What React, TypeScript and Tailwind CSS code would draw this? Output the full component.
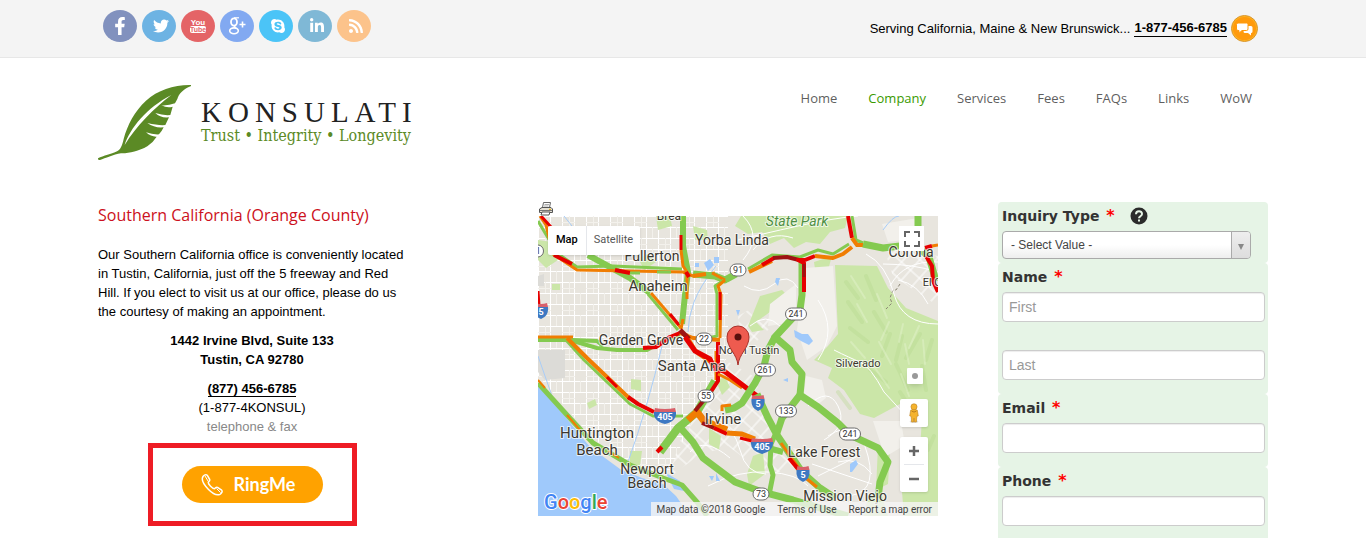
import type { ReactNode } from "react";
import { FaFacebookF, FaTwitter, FaSkype, FaLinkedinIn, FaRss } from "react-icons/fa";

const GREEN = "#84ca50";
const ORANGE = "#f07d02";
const RED = "#e60000";
const DARK = "#9e1313";

function YouTubeMark() {
  return (
    <svg viewBox="0 0 18 16" className="h-4 w-[18px]">
      <text x="9" y="7" textAnchor="middle" fontSize="8" fontWeight="bold" fill="#fff" fontFamily="Liberation Sans Narrow, Liberation Sans, sans-serif">You</text>
      <rect x="1" y="8" width="16" height="7" rx="2" fill="#fff" />
      <text x="9" y="14" textAnchor="middle" fontSize="7" fontWeight="bold" fill="#e46466" fontFamily="Liberation Sans Narrow, Liberation Sans, sans-serif">Tube</text>
    </svg>
  );
}

function GooglePlusMark() {
  return (
    <svg viewBox="0 0 20 20" className="size-5" fill="none" stroke="#fff">
      <ellipse cx="7" cy="6" rx="3" ry="3.7" strokeWidth="1.8" />
      <path d="M7 1.8h5" strokeWidth="1.2" />
      <path d="M8.500 9.600c-2 1 -1 1.800 .8 2.800" strokeWidth="1.600" />
      <ellipse cx="7" cy="14.800" rx="4.300" ry="2.900" strokeWidth="1.600" />
      <path d="M15.500 5.500v6M12.500 8.500h6" strokeWidth="1.600" />
    </svg>
  );
}

const socials: { label: string; bg: string; icon: ReactNode }[] = [
  { label: "Facebook", bg: "bg-[#8191be]", icon: <FaFacebookF className="size-[18px]" /> },
  { label: "Twitter", bg: "bg-[#6db3e3]", icon: <FaTwitter className="ml-1 size-4" /> },
  { label: "YouTube", bg: "bg-[#e46466]", icon: <YouTubeMark /> },
  { label: "Google Plus", bg: "bg-[#82a9f1]", icon: <GooglePlusMark /> },
  { label: "Skype", bg: "bg-[#4bc4f7]", icon: <FaSkype className="ml-1 size-4" /> },
  { label: "LinkedIn", bg: "bg-[#7fb8d6]", icon: <FaLinkedinIn className="ml-1 size-4" /> },
  { label: "RSS", bg: "bg-[#fcc38b]", icon: <FaRss className="ml-1 size-4" /> },
];

function TopBar() {
  return (
    <div className="border-b border-[#e7e7e7] bg-[#f4f4f4]">
      <div className="mx-auto flex h-[57px] max-w-[1170px] items-center justify-between pr-[10px] pl-[5px]">
        <div className="-mt-[5px] flex gap-[5px]">
          {socials.map((s) => (
            <a key={s.label} href="#" aria-label={s.label} className={`flex h-8 w-[34px] items-center justify-center rounded-[50%] text-white ${s.bg}`}>
              {s.icon}
            </a>
          ))}
        </div>
        <div className="flex items-center gap-1 text-[13px] text-black">
          <span>Serving California, Maine &amp; New Brunswick...</span>
          <a href="tel:18774566785" className="border-b border-black leading-4 font-bold">1-877-456-6785</a>
          <a href="#" aria-label="Chat">
            <svg viewBox="0 0 27 27" className="size-[27px]">
              <circle cx="13.5" cy="13.5" r="13" fill="#ffb21e" stroke="#d9962e" />
              <circle cx="13.5" cy="13.5" r="11.500" fill="#ff9a0c" />
              <path d="M16 11h4a1.500 1.500 0 0 1 1.500 1.500v4a1.500 1.500 0 0 1 -1.500 1.500v2.500l-3-2.500h-3a1.500 1.500 0 0 1 -1.500 -1.500z" fill="#fff" />
              <path d="M7 8h8.500a1.500 1.500 0 0 1 1.500 1.500v4.500a1.500 1.500 0 0 1 -1.500 1.500h-4.500l-3 2.700v-2.700h-1a1.500 1.500 0 0 1 -1.500 -1.500v-4.500a1.500 1.500 0 0 1 1.500 -1.500z" fill="#fff" stroke="#ff9a0c" strokeWidth="1" />
            </svg>
          </a>
        </div>
      </div>
    </div>
  );
}

function Leaf() {
  return (
    <svg viewBox="24 27 282 231" className="h-[77px] w-[94px]" aria-hidden="true">
      <path
        fill="#5b8a25"
        d="M24 250C40 241 66 236 78 230C92 226 97 210 101 192C112 150 134 108 168 77C204 45 252 29 303 30C304 33 302 35 298 35C280 43 266 56 262 72L255 85Q237 92 214 91Q232 100 248 95L241 120Q220 122 196 114Q212 130 237 127L226 150Q206 152 172 144Q194 160 221 157Q216 168 207 178Q188 179 168 172Q184 186 200 185Q188 204 172 214C146 229 114 236 93 235C70 239 46 250 30 255C26 256 23 252 24 250Z"
      />
      <path d="M104 210C120 160 170 98 244 60C190 102 140 152 104 210Z" fill="#fff" />
    </svg>
  );
}

const nav = ["Home", "Company", "Services", "Fees", "FAQs", "Links", "WoW"];

function Header() {
  return (
    <header className="mx-auto flex h-36 max-w-[1170px] items-start justify-between pt-[26px] pr-4">
      <a href="#" className="flex gap-[9px]">
        <Leaf />
        <span className="flex flex-col pt-[14px]">
          <span className="font-[Liberation_Serif,serif] text-[29px] leading-7 tracking-[6px] text-[#222]">KONSULATI</span>
          <span className="font-[DejaVu_Serif_Condensed,DejaVu_Serif,serif] text-[16px] leading-5 text-[#5b8a25]">Trust • Integrity • Longevity</span>
        </span>
      </a>
      <nav className="flex gap-[31px] pt-1 font-[Open_Sans,sans-serif] text-[13px] leading-5">
        {nav.map((n) => (
          <a key={n} href="#" className={n === "Company" ? "text-[#3a9a00]" : "text-[#5f5f5f]"}>{n}</a>
        ))}
      </nav>
    </header>
  );
}

function Office() {
  return (
    <section className="max-w-[308px] text-[13px] leading-[19px] text-black">
      <h1 className="font-[Open_Sans,sans-serif] text-[16px] leading-[26px] text-[#cc1020]">Southern California (Orange County)</h1>
      <p className="mt-[17px]">
        Our Southern California office is conveniently located in Tustin, California, just off the 5 freeway and Red Hill. If you elect to visit us at our office, please do us the courtesy of making an appointment.
      </p>
      <div className="text-center">
        <p className="mt-[10px] font-bold">1442 Irvine Blvd, Suite 133<br />Tustin, CA 92780</p>
        <p className="mt-[10px]"><a href="tel:8774566785" className="border-b border-black font-bold">(877) 456-6785</a></p>
        <p>(1-877-4KONSUL)</p>
        <p className="text-[#888]">telephone &amp; fax</p>
      </div>
      <div className="mx-auto mt-[7px] flex h-[83px] w-[209px] items-center justify-center border-[5px] border-[#ee1c25]">
        <button className="flex h-[37px] w-[141px] items-center gap-[10px] rounded-full bg-[#ffa200] pl-[18px] font-[Lato,sans-serif] text-[18px] font-bold text-white">
          <svg viewBox="0 0 24 24" className="size-6" fill="none" stroke="#fff" strokeWidth="1.500" strokeLinejoin="round">
            <path d="M3 3.500C4 2 6 1 7.200 2.200L9.700 6.500C10.200 7.500 9.500 8.300 8.300 9.200C8 11 12.500 15.800 14.700 15.700C15.600 14.300 16.500 13.800 17.500 14.400L21.700 17.200C22.800 18.200 21.500 20.500 20 21.300C17 22.800 12.500 20.500 8.500 16.500C4 12 1 6.800 3 3.500Z" />
            <path d="M5 3l3 5M16.500 15.500l4 4" strokeWidth="1" />
          </svg>
          RingMe
        </button>
      </div>
    </section>
  );
}

type Road = { c: string; w: number; p: string };

const roads: Road[] = [
  { c: GREEN, w: 5, p: "0,167 29,199 55,227 92,249 125,262 144,269 159,286 169,300" },
  { c: ORANGE, w: 2, p: "0,164 7,172" },
  { c: ORANGE, w: 2, p: "29,199 42,214" },
  { c: ORANGE, w: 2, p: "70,235 81,242" },
  { c: GREEN, w: 6, p: "50,39 92,62 112,77" },
  { c: GREEN, w: 3, p: "110,78 140,114" },
  { c: ORANGE, w: 3, p: "113,77 143,112" },
  { c: RED, w: 3, p: "132,98 141,109" },
  { c: GREEN, w: 6, p: "145,0 145,30 150,56 147,79 144,108" },
  { c: RED, w: 3, p: "143,19 143,34" },
  { c: ORANGE, w: 3, p: "143,34 145,50 149,56 149,83" },
  { c: ORANGE, w: 3, p: "145,103 143,113" },
  { c: GREEN, w: 3, p: "0,5 19,37 39,51 75,50 144,53" },
  { c: ORANGE, w: 3, p: "2,0 8,9 15,38 39,54 145,56 155,60 177,57" },
  { c: RED, w: 3, p: "3,0 13,11" },
  { c: RED, w: 4, p: "16,39 34,48" },
  { c: RED, w: 4, p: "77,54 92,57" },
  { c: GREEN, w: 3, p: "92,57 102,57" },
  { c: GREEN, w: 3, p: "119,56 133,56" },
  { c: GREEN, w: 7, p: "155,58 177,60 187,64 198,58" },
  { c: ORANGE, w: 4, p: "155,60 168,58" },
  { c: ORANGE, w: 3, p: "174,57 187,64" },
  { c: RED, w: 4, p: "148,56 151,61" },
  { c: GREEN, w: 3, p: "186,64 177,70 179,78 179,120 170,122" },
  { c: ORANGE, w: 3, p: "187,64 180,70 183,79 182,122" },
  { c: RED, w: 3, p: "182,76 182,104" },
  { c: GREEN, w: 4, p: "0,124 35,124 59,125 65,130" },
  { c: GREEN, w: 4, p: "35,125 59,132 79,134 109,134 125,125 142,119" },
  { c: ORANGE, w: 3, p: "0,121 35,121" },
  { c: RED, w: 4, p: "105,132 118,131 132,121 142,117" },
  { c: ORANGE, w: 4, p: "142,117 155,122 182,124" },
  { c: GREEN, w: 3, p: "27,123 46,144 69,166 92,188 115,200 145,200" },
  { c: ORANGE, w: 4, p: "29,122 49,142 69,161 92,183" },
  { c: RED, w: 3, p: "69,161 79,171" },
  { c: RED, w: 4, p: "90,181 100,188 116,196" },
  { c: GREEN, w: 8, p: "122,236 140,212 159,196 177,165" },
  { c: RED, w: 4, p: "119,236 124,231" },
  { c: ORANGE, w: 7, p: "150,204 159,196 166,205 189,214" },
  { c: ORANGE, w: 3, p: "148,118 160,138 176,149" },
  { c: DARK, w: 5, p: "142,114 151,123" },
  { c: RED, w: 5, p: "147,121 157,135 172,143 176,152" },
  { c: ORANGE, w: 3, p: "178,135 178,164" },
  { c: RED, w: 4, p: "180,126 180,153 180,165 172,177" },
  { c: DARK, w: 4, p: "166,184 157,195" },
  { c: ORANGE, w: 3, p: "180,158 192,164 204,172" },
  { c: RED, w: 5, p: "176,152 186,155 202,167 219,180" },
  { c: DARK, w: 4, p: "164,207 176,212" },
  { c: RED, w: 4, p: "176,212 189,218" },
  { c: ORANGE, w: 5, p: "189,217 204,218 217,223" },
  { c: RED, w: 3, p: "202,222 214,225" },
  { c: GREEN, w: 7, p: "139,208 155,226 165,242 189,260 197,266 224,276 255,284 310,300" },
  { c: GREEN, w: 7, p: "219,178 230,202 239,219 264,256 282,272 297,282" },
  { c: GREEN, w: 6, p: "230,232 245,236" },
  { c: ORANGE, w: 3, p: "243,227 255,244 269,263 279,271" },
  { c: RED, w: 4, p: "251,242 260,253" },
  { c: GREEN, w: 7, p: "237,121 230,134 226,150 217,167 204,187 196,192 187,194" },
  { c: ORANGE, w: 3, p: "184,195 184,190 193,189" },
  { c: GREEN, w: 7, p: "264,46 264,79 262,94 237,121 252,134 254,146 264,158 262,179 280,191 300,207 312,219 340,232 350,246 342,266 340,282" },
  { c: GREEN, w: 7, p: "262,179 244,202 239,217" },
  { c: GREEN, w: 5, p: "237,219 233,228 232,249 235,259 231,279" },
  { c: GREEN, w: 3, p: "210,53 234,39 262,41 280,34 295,38 311,28" },
  { c: ORANGE, w: 4, p: "211,56 234,45" },
  { c: RED, w: 4, p: "224,49 236,42" },
  { c: DARK, w: 4, p: "235,42 249,41 261,44" },
  { c: RED, w: 4, p: "266,76 266,47 260,44 267,44 277,40" },
  { c: DARK, w: 3, p: "266,48 266,61" },
  { c: ORANGE, w: 4, p: "277,40 295,42 305,38 314,31" },
  { c: GREEN, w: 3, p: "314,0 318,24 325,27" },
  { c: RED, w: 4, p: "310,0 314,22" },
  { c: ORANGE, w: 4, p: "314,22 319,29 325,29" },
  { c: GREEN, w: 7, p: "325,28 345,32 362,30 380,31" },
  { c: GREEN, w: 7, p: "380,0 380,31 391,41 398,65" },
  { c: RED, w: 4, p: "387,32 394,30" },
  { c: ORANGE, w: 3, p: "394,30 400,29" },
  { c: RED, w: 4, p: "388,40 394,50 395,65 400,76" },
  { c: RED, w: 3, p: "0,75 1,90" },
];

const places: { t: string; x: number; y: number; s: number }[] = [
  { t: "Brea", x: 131, y: 4, s: 12 },
  { t: "Yorba Linda", x: 194, y: 29, s: 14 },
  { t: "Fullerton", x: 114, y: 45, s: 14 },
  { t: "Anaheim", x: 120, y: 75, s: 15 },
  { t: "Garden Grove", x: 103, y: 129, s: 14 },
  { t: "Santa Ana", x: 154, y: 155, s: 15 },
  { t: "North Tustin", x: 211, y: 138, s: 11 },
  { t: "Silverado", x: 320, y: 151, s: 11 },
  { t: "Irvine", x: 185, y: 208, s: 15 },
  { t: "Huntington", x: 59, y: 222, s: 15 },
  { t: "Beach", x: 59, y: 239, s: 15 },
  { t: "Newport", x: 109, y: 258, s: 14 },
  { t: "Beach", x: 109, y: 272, s: 14 },
  { t: "Lake Forest", x: 286, y: 241, s: 14 },
  { t: "Mission Viejo", x: 307, y: 285, s: 14 },
  { t: "Corona", x: 373, y: 41, s: 14 },
  { t: "El Cerrito", x: 407, y: 70, s: 11 },
];

const routes: { t: string; x: number; y: number }[] = [
  { t: "1", x: 0, y: 35 },
  { t: "91", x: 200, y: 54 },
  { t: "22", x: 166, y: 123 },
  { t: "55", x: 168, y: 180 },
  { t: "241", x: 258, y: 98 },
  { t: "261", x: 227, y: 154 },
  { t: "133", x: 248, y: 195 },
  { t: "241", x: 312, y: 218 },
  { t: "73", x: 223, y: 278 },
];

const interstates: { t: string; x: number; y: number; w: number }[] = [
  { t: "405", x: 127, y: 200, w: 22 },
  { t: "5", x: 220, y: 187, w: 13 },
  { t: "405", x: 224, y: 230, w: 22 },
  { t: "5", x: 265, y: 258, w: 13 },
  { t: "5", x: 3, y: 95, w: 14 },
];

function Tracts() {
  return (
    <g fill="none">
      <g fill="#cbe6a8">
        <path d="M203 0h107l-3 12-15 4-10 12-14-2-12 6-10-10-14 6-8-12-14 2-13-8z" />
        <path d="M0 24l14 2 6 18-12 8-8-8z M14 68h8v6h-8z M118 0l14 0 2 10-14 4z M155 10l14 4 1 10-13 0z" />
        <path d="M297 49l42 1 11 22 18 20 32 13V202l-38 0 0-14-26 14-14-4-16-24-16-12 4-10-18-8 14-14 10-12z" />
        <path d="M222 80l22-6 8 8-20 14-14 10 8 8-12 2-4-6z M276 46l18-6-4 14-12 6z" />
        <path d="M93 163l10 1 0 11-10-2z M92 235l12 0-2 14-10 2z M49 187l8-4 2 6-8 4z M171 212l12 8-2 14-10-6z M178 165l9-4 5 10-8 8z M209 258l6-18 10-4 2 22-16 12z M256 284l12 2 8 14h-20z" />
        <path d="M340 230l12 4-2 34-12 6z M384 202l16 0v98h-34l-2-24 14-12 4-30z M100 42l10-4 8 8-12 8z M330 282l12-8 8 26h-24z" />
      </g>
      <path d="M0 134l27 0 0 28-20 2-7-8z M0 60l6-2v12H0z M90 36h12v8H90z" fill="#dcdbd7" />
      <g fill="#f2f0eb">
        <path d="M232 88l26-20v26l-14 14-14 2z M267 52l28-2 4 60-10 20-20 14-10-30z M344 8l36-6v20l-30 4z" />
        <path d="M268 160l16 4 4 18-10 8-12-12z M335 205l28 0 4 24-20 12z" />
      </g>
      <g stroke="#b4d78c" strokeWidth="4" strokeLinecap="round" opacity=".35">
        <path d="M308 66l12 16m-10 4l14 20m4-46l10 24m-26 28l18 14m6-30l12 20m4 2l-8 22m20-20l-6 24m24-26l-14 24m26-18l-6 20m-56 10l16 12m10-18l12 26m14-24l4 24m16-32l2 30m-44 4l14 22m-76-22l12 16m84 28l-6 14" />
      </g>
      <g stroke="#e2f1ca" strokeWidth="2" strokeLinecap="round" opacity=".5">
        <path d="M313 60l14 22m-8 6l10 18m10-28l10 24m2 4l-8 18m22-16l-4 18m20-16l-10 22m-58-6l14 16m14-16l12 22m14-20l4 20m14-24l2 24m-50 4l14 20m12-14l8 22" />
      </g>
      <path d="M362 68l-4 6-3 0-3 8 2 5-6 6" stroke="#8b8574" strokeDasharray="3 2" />
    </g>
  );
}

function RoadMap() {
  return (
    <svg viewBox="0 0 400 300" className="block h-[300px] w-full" preserveAspectRatio="xMidYMid slice" role="img" aria-label="Map of Orange County">
      <defs>
        <pattern id="blocks" width="24" height="22" patternUnits="userSpaceOnUse">
          <path d="M0 .5H24M0 11.500H24M.5 0V22M12.500 0V22" stroke="#fff" strokeWidth="1" fill="none" />
          <path d="M0 6.500H13M7.500 0V11M18.500 11V22" stroke="#f3f1ec" strokeWidth="1" fill="none" />
        </pattern>
        <pattern id="slanted" width="12" height="14" patternUnits="userSpaceOnUse" patternTransform="rotate(42)">
          <path d="M0 1H12M1 0V14" stroke="#fff" strokeWidth="1" fill="none" />
        </pattern>
      </defs>
      <rect width="400" height="300" fill="#e8e5de" />
      <path d="M0 0H190V140L160 190L130 260L70 240L0 160Z" fill="url(#blocks)" />
      <path d="M180 140L215 160L245 230L270 235L260 250L230 260L190 230L160 240L130 262L142 225L150 215Z M200 100l36-20 8 20-40 40z M345 30l55 10v50l-45-30z" fill="url(#slanted)" />
      <Tracts />
      <g fill="none" stroke="#fff" strokeWidth="1">
        <path d="M205 0q20 20 0 44M215 34q16-20 40-12M206 70q16 10 30-2t24 4M212 110q16-14 30 0M200 24q24-6 60-14t60-10M280 84q20 30 0 60M270 190q20-20 30 0t-14 34M290 220q30-20 40 20t-24 40M300 246q20-6 34 12M328 38q20 10 28 40t44 30M345 48q30 0 55 8M152 236q14-16 40 6M170 270q30-16 60-14t40 14M176 204q20 6 26 30t26 24M352 70q14-26 48-24M360 64q20 4 30 24M296 134q16 8 26 12t24 30l22 24M274 248l60 20M280 260l40-20" />
      </g>
      <g fill="#9fc9fb">
        <path d="M0 168L29 203L52 231L82 253L104 262L125 268L138 280L145 290L150 300H0Z" />
        <path d="M256 114l8 4 6 0 5 7-4 4-8-4-6-4z M166 47l6-4 4 6-6 6z M176 41l5 0v6h-5z M157 47h4v4h-4z M238 62l4 0-2 8-3-4z M312 248l6-4 2 4-6 8-2 0z M198 94l4 0-2 6z M171 260l5 0-2 5z M178 257l4 8-4 0z M245 164l5-2 0 4z M128 257l14 8 4 10-10-2z" />
      </g>
      <g fill="none" stroke="#a8cdf8" strokeWidth="1">
        <path d="M178 50q-16 20-22 36t-6 30M124 130q-14 60-34 116M0 140l14 40M345 14q10-14 16-14M26 0l24 30" />
      </g>
      <g fill="none" strokeLinejoin="round">
        {roads.map((r, i) => (
          <polyline key={i} points={r.p} stroke={r.c} strokeWidth={r.w} />
        ))}
      </g>
      <g fill="#3b372f" stroke="#fff" strokeOpacity=".7" strokeWidth="2" strokeLinejoin="round" paintOrder="stroke" fontFamily="Roboto, sans-serif" textAnchor="middle">
        {places.map((p) => (
          <text key={`${p.t}-${p.y}`} x={p.x} y={p.y} fontSize={p.s}>{p.t}</text>
        ))}
        <text x="259" y="10" fontSize="14" fontStyle="italic" fill="#4f8f45">State Park</text>
      </g>
      <g fontFamily="Roboto, sans-serif" fontSize="9" textAnchor="middle">
        {routes.map((r) => {
          const w = r.t.length * 5 + 6;
          return (
            <g key={`${r.t}-${r.x}`}>
              <rect x={r.x - w / 2} y={r.y - 6} width={w} height="12" rx="6" fill="#fff" stroke="#6c6c6c" />
              <text x={r.x} y={r.y + 3} fill="#333">{r.t}</text>
            </g>
          );
        })}
        {interstates.map((r) => {
          const l = r.x - r.w / 2;
          const e = r.x + r.w / 2;
          return (
            <g key={`${r.t}-${r.x}`}>
              <path d={`M${l} ${r.y - 4}H${e}Q${e + 1} ${r.y + 5} ${r.x} ${r.y + 8}Q${l - 1} ${r.y + 5} ${l} ${r.y - 4}Z`} fill="#3d78c2" />
              <path d={`M${l + 1} ${r.y - 8}Q${r.x} ${r.y - 6} ${e - 1} ${r.y - 8}L${e} ${r.y - 4}H${l}Z`} fill="#d8606a" />
              <text x={r.x} y={r.y + 4} fill="#fff" fontWeight="bold">{r.t}</text>
            </g>
          );
        })}
      </g>
      <path d="M200 149C199 138 189 132 189 121A11 11 0 0 1 211 121C211 132 201 138 200 149Z" fill="#ee5b4f" stroke="#a8322b" />
      <circle cx="200" cy="121" r="3.500" fill="#5a100d" />
      <g fontFamily="Roboto, sans-serif" fontSize="20" fontWeight="500" stroke="#fff" strokeWidth="2" paintOrder="stroke" strokeLinejoin="round">
        <text x="6" y="293">
          <tspan fill="#4285f4">G</tspan><tspan fill="#ea4335">o</tspan><tspan fill="#fbbc05">o</tspan><tspan fill="#4285f4">g</tspan><tspan fill="#34a853">l</tspan><tspan fill="#ea4335">e</tspan>
        </text>
      </g>
    </svg>
  );
}

function MapPanel() {
  return (
    <section className="max-w-[400px] font-[Roboto,sans-serif]">
      <button aria-label="Print" className="block h-[14px]">
        <svg viewBox="0 0 16 14" className="h-[14px] w-4">
          <path d="M4.500 5.500L5.500 0.500H12.500L11.500 5.500Z" fill="#fff" stroke="#666" />
          <path d="M6.500 2.500H11M6 4H10.500" stroke="#999" strokeWidth=".8" />
          <path d="M1.500 7L4 5.500H13L14.500 7V10.500H1.500Z" fill="#e4e0d3" stroke="#555" />
          <path d="M2 8.500H14" stroke="#777" />
          <path d="M4 10H12L11 13H3Z" fill="#fff" stroke="#555" />
          <path d="M11 7.300h2" stroke="#d9a300" />
        </svg>
      </button>
      <div className="relative">
        <RoadMap />
        <div className="absolute top-[10px] left-[10px] flex h-[29px] rounded-[2px] bg-white text-[11px] shadow">
          <button className="border-r border-gray-200 px-2 font-medium text-black">Map</button>
          <button className="px-[7px] text-[#565656]">Satellite</button>
        </div>
        <button aria-label="Toggle fullscreen" className="absolute top-[10px] right-[14px] flex size-[25px] items-center justify-center bg-white">
          <svg viewBox="0 0 16 16" className="size-4" fill="none" stroke="#666" strokeWidth="2">
            <path d="M1 6V1H6M10 1H15V6M15 10V15H10M6 15H1V10" />
          </svg>
        </button>
        <div className="absolute right-[10px] bottom-6 flex flex-col items-center">
          <button aria-label="Tilt" className="mb-[15px] ml-[2px] flex size-4 items-center justify-center rounded-[1px] bg-white shadow-md">
            <span className="size-[6px] rounded-full bg-[#999]" />
          </button>
          <button aria-label="Street View" className="mb-[10px] flex size-7 items-center justify-center rounded-[2px] bg-white shadow">
            <svg viewBox="0 0 14 22" className="h-[21px] w-[14px]">
              <ellipse cx="7" cy="19.500" rx="4.500" ry="1.500" fill="#e0e0e0" />
              <path d="M3.500 7.500Q7 5.500 10.500 7.500L11.500 13.500L10 14L9.500 20H7.500L7 16L6.500 20H4.500L4 14L2.500 13.500Z" fill="#f5b32d" stroke="#b97c1a" strokeWidth=".6" />
              <circle cx="7" cy="4" r="3.200" fill="#f5b32d" stroke="#b97c1a" strokeWidth=".6" />
              <path d="M4.500 8.500Q7 10.500 9.500 8.500" fill="none" stroke="#b97c1a" />
            </svg>
          </button>
          <div className="flex w-7 flex-col items-center rounded-[2px] bg-white shadow">
            <button aria-label="Zoom in" className="flex h-[27px] w-7 items-center justify-center">
              <svg viewBox="0 0 10 10" className="size-[10px]"><path d="M5 0V10M0 5H10" stroke="#666" strokeWidth="2.500" /></svg>
            </button>
            <span className="h-px w-5 bg-gray-200" />
            <button aria-label="Zoom out" className="flex h-[27px] w-7 items-center justify-center">
              <svg viewBox="0 0 10 10" className="size-[10px]"><path d="M0 5H10" stroke="#666" strokeWidth="2.500" /></svg>
            </button>
          </div>
        </div>
        <div className="absolute right-0 bottom-0 flex h-[14px] items-center gap-3 bg-[#f5f5f5]/80 pr-[6px] pl-[5px] text-[10px] whitespace-nowrap text-[#444]">
          <span>Map data ©2018 Google</span>
          <a href="#">Terms of Use</a>
          <a href="#">Report a map error</a>
        </div>
      </div>
    </section>
  );
}

const label = "block text-[14px] leading-5 font-bold text-[#333] font-[DejaVu_Sans,sans-serif]";
const block = "rounded-[4px] bg-[#e6f4e6] pt-1 pr-[3px] pb-[14px] pl-1";
const input = "block h-[30px] w-full rounded-[4px] border border-[#ccc] bg-white px-[6px] text-[14px] shadow-[inset_0_1px_1px_#00000013] placeholder:text-[#999]";

function Star() {
  return <span className="ml-[2px] text-[16px] leading-4 font-bold text-[#ff0000]">*</span>;
}

function InquiryForm() {
  return (
    <form className="text-[#444]">
      <div className="rounded-[4px] bg-[#e6f4e6] pt-1 pr-[17px] pb-1 pl-1">
        <div className="mb-[5px] flex items-center gap-[15px]">
          <label htmlFor="inquiry" className={label}>Inquiry Type <Star /></label>
          <button type="button" aria-label="Help">
            <svg viewBox="0 0 18 18" className="block size-[18px]">
              <circle cx="9" cy="9" r="8.500" fill="#2b2b2b" />
              <path d="M6 7.200C6 3.200 12 3.200 12 7C12 9.200 9 9.300 9 11.200" fill="none" stroke="#e6f4e6" strokeWidth="2" />
              <rect x="8" y="12.500" width="2" height="2" fill="#e6f4e6" />
            </svg>
          </button>
        </div>
        <div className="relative">
          <select id="inquiry" className="block h-7 w-full appearance-none rounded-[4px] border border-[#aaa] bg-linear-to-b from-white from-50% to-[#eee] px-2 text-[12px] text-[#444]">
            <option>- Select Value -</option>
          </select>
          <span className="pointer-events-none absolute top-px right-px bottom-px flex w-[19px] items-center justify-center rounded-r-[3px] border-l border-[#aaa] bg-linear-to-b from-[#eee] to-[#ddd]">
            <svg viewBox="0 0 6 6" className="mt-[3px] size-[6px]"><path d="M0 0H6L3 6Z" fill="#888" /></svg>
          </span>
        </div>
      </div>
      <div className={block}>
        <label htmlFor="first" className={`${label} mb-[5px]`}>Name <Star /></label>
        <input id="first" placeholder="First" className={input} />
        <input aria-label="Last" placeholder="Last" className={`${input} mt-7`} />
      </div>
      <div className={block}>
        <label htmlFor="email" className={`${label} mb-[5px]`}>Email <Star /></label>
        <input id="email" type="email" className={input} />
      </div>
      <div className="rounded-t-[4px] bg-[#e6f4e6] pt-1 pr-[3px] pb-3 pl-1">
        <label htmlFor="phone" className={`${label} mb-[5px]`}>Phone <Star /></label>
        <input id="phone" type="tel" className={input} />
      </div>
    </form>
  );
}

export default function App() {
  return (
    <div className="bg-white font-[Liberation_Sans,Arial,sans-serif]">
      <TopBar />
      <Header />
      <main className="mx-auto grid max-w-[1170px] grid-cols-[44fr_46fr_27fr]">
        <Office />
        <MapPanel />
        <InquiryForm />
      </main>
    </div>
  );
}
